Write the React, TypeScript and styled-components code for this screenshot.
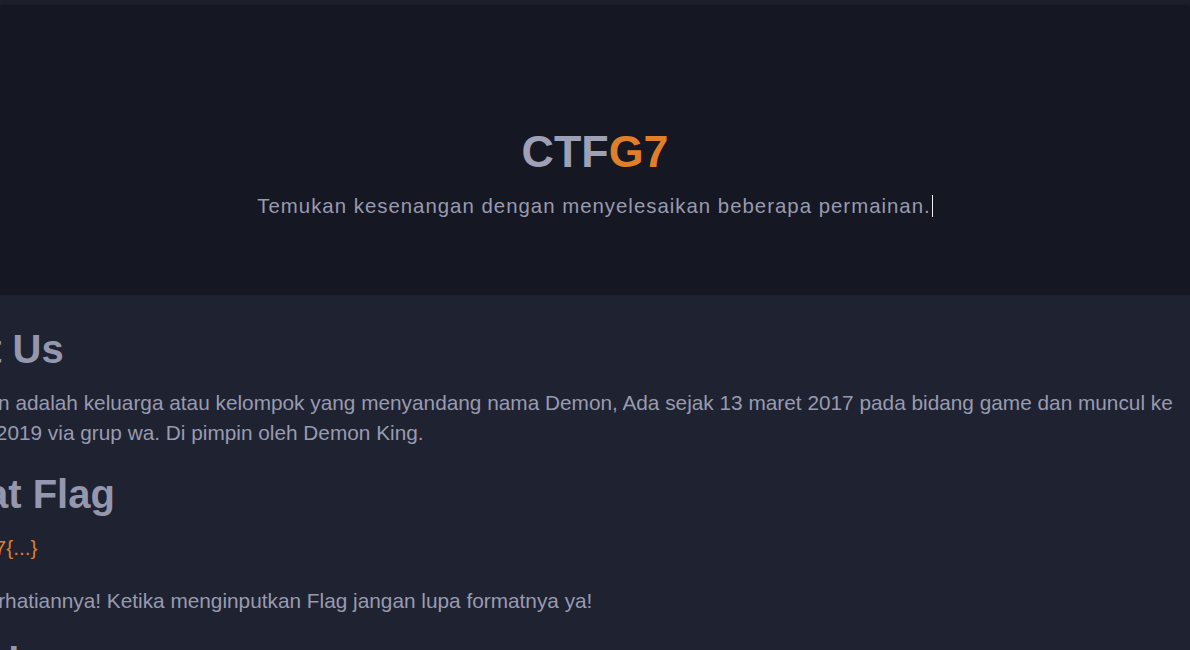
import React from "react";
import styled, { createGlobalStyle } from "styled-components";

const Global = createGlobalStyle`
  html, body {
    margin: 0;
    padding: 0;
    background: #1f2230;
    overflow: hidden;
  }
  body {
    font-family: "Liberation Sans", Arial, sans-serif;
    color: #989bb0;
  }
`;

const TopBar = styled.div`
  height: 7px;
  background: #1d1f2c;
`;

const Hero = styled.header`
  height: 288px;
  box-sizing: border-box;
  padding-top: 119px;
  background: #151722;
  box-shadow: 0 -2px 3px rgba(0, 0, 0, 0.35);
  text-align: center;
`;

const Title = styled.h1`
  margin: 0;
  font-size: 44.8px;
  font-weight: 700;
  line-height: 51px;
  color: #9ea1b6;
`;

const Accent = styled.span`
  color: #e07f2a;
`;

const Subtitle = styled.p`
  margin: 18px 0 0;
  font-size: 20.4px;
  line-height: 22px;
  letter-spacing: 1px;
  color: #989bb0;
`;

const Caret = styled.span`
  display: inline-block;
  width: 1px;
  height: 22px;
  margin-left: 1px;
  vertical-align: top;
  background: #f0f0f0;
`;

const Main = styled.main`
  overflow: hidden;
  padding-top: 31px;
`;

const Container = styled.div`
  width: 1380px;
  margin-left: -114px;
`;

const Heading = styled.h2`
  margin: 0 0 16px;
  font-size: 40px;
  font-weight: 700;
  line-height: 46px;
  color: #9497ad;
`;

const Para = styled.p`
  margin: 0 0 23px;
  font-size: 20.8px;
  line-height: 30px;
  color: #989bb0;
`;

const FlagText = styled(Para)`
  color: #e07f2a;
`;

export default function App() {
  return (
    <>
      <Global />
      <TopBar />
      <Hero>
        <Title>
          CTF<Accent>G7</Accent>
        </Title>
        <Subtitle>
          Temukan kesenangan dengan menyelesaikan beberapa permainan.
          <Caret />
        </Subtitle>
      </Hero>
      <Main>
        <Container>
          <Heading>About Us</Heading>
          <Para>
            Team Demon adalah keluarga atau kelompok yang menyandang nama Demon, Ada sejak 13 maret
            2017 pada bidang game dan muncul ke permukaan 2019 via grup wa. Di pimpin oleh Demon
            King.
          </Para>
          <Heading>Format Flag</Heading>
          <FlagText>Flag: CTFG7{"{...}"}</FlagText>
          <Para>Dimohon perhatiannya! Ketika menginputkan Flag jangan lupa formatnya ya!</Para>
          <Heading>Pendukung</Heading>
        </Container>
      </Main>
    </>
  );
}
